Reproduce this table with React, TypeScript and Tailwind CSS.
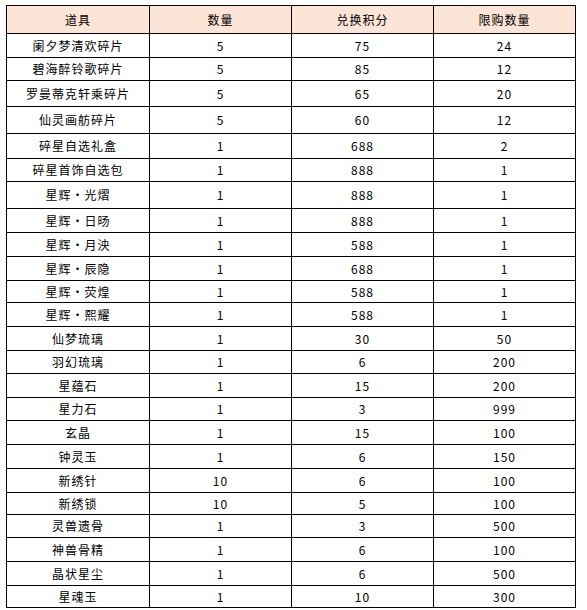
const rows = [
  { name: "阑夕梦清欢碎片", qty: "5", points: "75", limit: "24", h: "h-[24px]" },
  { name: "碧海醉铃歌碎片", qty: "5", points: "85", limit: "12", h: "h-[23px]" },
  { name: "罗曼蒂克轩乘碎片", qty: "5", points: "65", limit: "20", h: "h-[26px]" },
  { name: "仙灵画舫碎片", qty: "5", points: "60", limit: "12", h: "h-[27px]" },
  { name: "碎星自选礼盒", qty: "1", points: "688", limit: "2", h: "h-[25px]" },
  { name: "碎星首饰自选包", qty: "1", points: "888", limit: "1", h: "h-[23px]" },
  { name: "星辉・光熠", qty: "1", points: "888", limit: "1", h: "h-[27px]" },
  { name: "星辉・日旸", qty: "1", points: "888", limit: "1", h: "h-[24px]" },
  { name: "星辉・月泱", qty: "1", points: "588", limit: "1", h: "h-[24px]" },
  { name: "星辉・辰隐", qty: "1", points: "688", limit: "1", h: "h-[24px]" },
  { name: "星辉・荧煌", qty: "1", points: "588", limit: "1", h: "h-[22px]" },
  { name: "星辉・熙耀", qty: "1", points: "588", limit: "1", h: "h-[24px]" },
  { name: "仙梦琉璃", qty: "1", points: "30", limit: "50", h: "h-[24px]" },
  { name: "羽幻琉璃", qty: "1", points: "6", limit: "200", h: "h-[23px]" },
  { name: "星蕴石", qty: "1", points: "15", limit: "200", h: "h-[24px]" },
  { name: "星力石", qty: "1", points: "3", limit: "999", h: "h-[23px]" },
  { name: "玄晶", qty: "1", points: "15", limit: "100", h: "h-[24px]" },
  { name: "钟灵玉", qty: "1", points: "6", limit: "150", h: "h-[24px]" },
  { name: "新绣针", qty: "10", points: "6", limit: "100", h: "h-[24px]" },
  { name: "新绣锁", qty: "10", points: "5", limit: "100", h: "h-[22px]" },
  { name: "灵兽遗骨", qty: "1", points: "3", limit: "500", h: "h-[23px]" },
  { name: "神兽骨精", qty: "1", points: "6", limit: "100", h: "h-[24px]" },
  { name: "晶状星尘", qty: "1", points: "6", limit: "500", h: "h-[24px]" },
  { name: "星魂玉", qty: "1", points: "10", limit: "300", h: "h-[22px]" },
];

const headers = ["道具", "数量", "兑换积分", "限购数量"];

export default function App() {
  return (
    <div className="w-[587px] h-[610px] bg-white pt-[5px] pl-[6px] font-['Noto_Sans_CJK_SC',sans-serif] text-[12px] tracking-[1px] text-black">
      <table className="w-[569px] table-fixed border-collapse">
        <colgroup>
          <col className="w-[143px]" />
          <col className="w-[142px]" />
          <col className="w-[142px]" />
          <col className="w-[142px]" />
        </colgroup>
        <thead>
          <tr className="h-[28px] bg-[#fce4d6]">
            {headers.map((h) => (
              <th key={h} className="border border-black p-0 text-center font-normal leading-none">
                {h}
              </th>
            ))}
          </tr>
        </thead>
        <tbody>
          {rows.map((r) => (
            <tr key={r.name} className={r.h}>
              <td className="border border-black p-0 text-center leading-none">{r.name}</td>
              <td className="border border-black p-0 text-center leading-none">{r.qty}</td>
              <td className="border border-black p-0 text-center leading-none">{r.points}</td>
              <td className="border border-black p-0 text-center leading-none">{r.limit}</td>
            </tr>
          ))}
        </tbody>
      </table>
    </div>
  );
}
